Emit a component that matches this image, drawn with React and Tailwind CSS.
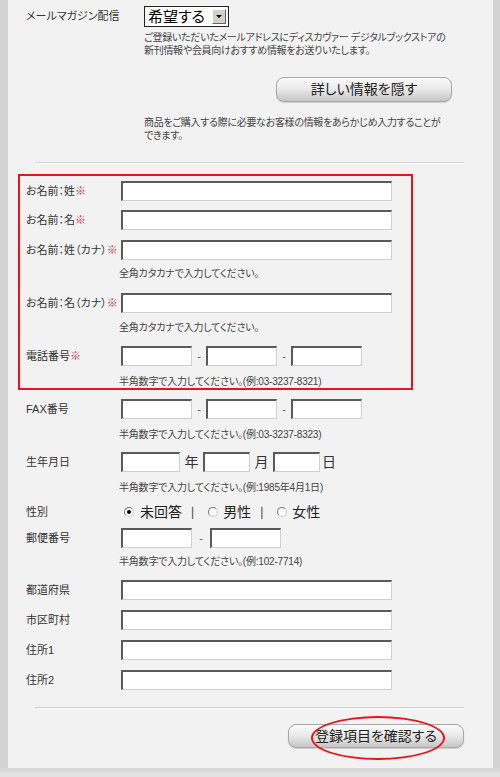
import React from "react";

const font = "font-['Liberation_Sans','Noto_Sans_CJK_JP',sans-serif] [font-feature-settings:'palt']";

function Field({ className = "" }) {
  return (
    <input
      type="text"
      className={`block h-[20px] bg-white border-t-2 border-l-2 border-r border-b border-t-[#5a5a5a] border-l-[#5a5a5a] border-r-[#d0d0d0] border-b-[#d0d0d0] outline-none ${className}`}
    />
  );
}

function Row({ label, req, className = "", children }) {
  return (
    <div className={`flex items-center h-[20px] ${className}`}>
      <div className="w-[101px] pl-[6px] text-[11px] text-[#333] whitespace-nowrap">
        {label}
        {req && <span className="text-[#c8323c]">※</span>}
      </div>
      <div className="flex items-center">{children}</div>
    </div>
  );
}

function Hint({ children, className = "" }) {
  return (
    <div className={`pl-[99px] text-[10px] leading-[13px] text-[#444] tracking-[-0.2px] ${className}`}>
      {children}
    </div>
  );
}

function Dash({ className = "" }) {
  return <span className={`text-[11px] text-[#555] text-center ${className}`}>-</span>;
}

function Radio({ checked }) {
  return (
    <span className="inline-flex items-center justify-center w-[10px] h-[10px] rounded-full bg-white border border-[#777] border-b-[#ccc] border-r-[#ccc]">
      {checked && <span className="w-[4px] h-[4px] rounded-full bg-black" />}
    </span>
  );
}

function GrayButton({ children, className = "" }) {
  return (
    <button
      className={`rounded-[8px] border border-[#a8a8a8] bg-gradient-to-b from-[#fbfbfb] via-[#e8e8e8] to-[#c6c6c6] text-[14px] text-[#222] shadow-[0_1px_1px_rgba(0,0,0,0.15)] ${className}`}
    >
      {children}
    </button>
  );
}

export default function App() {
  return (
    <div className={`w-[500px] h-[777px] bg-[#d3d3d3] overflow-hidden ${font}`}>
      <div className="ml-[8px] w-[485px] h-[768px] bg-[#f2f2f2]">
        {/* MAIL MAGAZINE */}
        <div className="pt-[6px] pl-[18px]">
          <div className="flex items-center h-[21px]">
            <div className="w-[118px] text-[11px] text-[#333]">メールマガジン配信</div>
            <div className="flex items-center w-[85px] h-[21px] bg-white border border-[#222]">
              <span className="flex-1 pl-[3px] text-[15px] leading-none text-black">希望する</span>
              <span className="flex items-center justify-center w-[14px] h-[15px] mr-[2px] bg-[#d4d0c8] border border-[#fff] border-b-[#666] border-r-[#666]">
                <span className="w-0 h-0 border-l-[3px] border-r-[3px] border-t-[3px] border-l-transparent border-r-transparent border-t-black" />
              </span>
            </div>
          </div>
          <div className="mt-[4px] pl-[118px] text-[10px] leading-[13px] text-[#444] tracking-[-0.3px]">
            <div>ご登録いただいたメールアドレスにディスカヴァー デジタルブックストアの</div>
            <div>新刊情報や会員向けおすすめ情報をお送りいたします。</div>
          </div>
        </div>

        <GrayButton className="block mt-[20px] ml-[268px] w-[176px] h-[25px]">詳しい情報を隠す</GrayButton>

        <div className="mt-[14px] pl-[136px] text-[10px] leading-[13px] text-[#444] tracking-[-0.3px]">
          <div>商品をご購入する際に必要なお客様の情報をあらかじめ入力することが</div>
          <div>できます。</div>
        </div>

        <div className="mt-[20px] ml-[27px] w-[429px] h-[2px] bg-[#d2d2d2] border-b border-white" />

        {/* FORM */}
        <div className="mt-[10px] ml-[12px] w-[391px]">
          <div className="-mx-[2px] border-2 border-[#e8141b]">
            <Row label="お名前：姓" req className="mt-[5px]">
              <Field className="w-[271px]" />
            </Row>
            <Row label="お名前：名" req className="mt-[9px]">
              <Field className="w-[271px]" />
            </Row>
            <Row label="お名前：姓（カナ）" req className="mt-[10px]">
              <Field className="w-[271px]" />
            </Row>
            <Hint className="mt-[7px]">全角カタカナで入力してください。</Hint>
            <Row label="お名前：名（カナ）" req className="mt-[13px]">
              <Field className="w-[271px]" />
            </Row>
            <Hint className="mt-[8px]">全角カタカナで入力してください。</Hint>
            <Row label="電話番号" req className="mt-[12px]">
              <Field className="w-[71px]" />
              <Dash className="w-[14px]" />
              <Field className="w-[71px]" />
              <Dash className="w-[14px]" />
              <Field className="w-[71px]" />
            </Row>
            <Hint className="mt-[9px]">半角数字で入力してください。(例:03-3237-8321)</Hint>
          </div>

          <Row label="FAX番号" className="mt-[9px]">
            <Field className="w-[71px]" />
            <Dash className="w-[14px]" />
            <Field className="w-[71px]" />
            <Dash className="w-[14px]" />
            <Field className="w-[71px]" />
          </Row>
          <Hint className="mt-[9px]">半角数字で入力してください。(例:03-3237-8323)</Hint>

          <Row label="生年月日" className="mt-[11px]">
            <Field className="w-[59px]" />
            <span className="w-[23px] text-center text-[14px] text-[#333]">年</span>
            <Field className="w-[47px]" />
            <span className="w-[23px] text-center text-[14px] text-[#333]">月</span>
            <Field className="w-[47px]" />
            <span className="w-[18px] text-center text-[14px] text-[#333]">日</span>
          </Row>
          <Hint className="mt-[9px]">半角数字で入力してください。(例:1985年4月1日)</Hint>

          <Row label="性別" className="mt-[8px]">
            <span className="ml-[3px] flex items-center gap-[6px] text-[14px] text-[#222]">
              <Radio checked />
              <span>未回答</span>
            </span>
            <span className="mx-[9px] text-[12px] text-[#444]">|</span>
            <span className="ml-[5px] flex items-center gap-[5px] text-[14px] text-[#222]">
              <Radio />
              <span>男性</span>
            </span>
            <span className="mx-[9px] text-[12px] text-[#444]">|</span>
            <span className="ml-[5px] flex items-center gap-[5px] text-[14px] text-[#222]">
              <Radio />
              <span>女性</span>
            </span>
          </Row>

          <Row label="郵便番号" className="mt-[6px]">
            <Field className="w-[71px]" />
            <Dash className="w-[18px]" />
            <Field className="w-[71px]" />
          </Row>
          <Hint className="mt-[7px]">半角数字で入力してください。(例:102-7714)</Hint>

          <Row label="都道府県" className="mt-[12px]">
            <Field className="w-[271px]" />
          </Row>
          <Row label="市区町村" className="mt-[10px]">
            <Field className="w-[271px]" />
          </Row>
          <Row label="住所1" className="mt-[10px]">
            <Field className="w-[271px]" />
          </Row>
          <Row label="住所2" className="mt-[10px]">
            <Field className="w-[271px]" />
          </Row>
        </div>

        <div className="mt-[17px] ml-[27px] w-[429px] h-[2px] bg-[#cfcfcf] border-b border-white" />

        <div className="relative mt-[15px] ml-[280px] w-[176px] h-[24px]">
          <GrayButton className="block w-full h-full">登録項目を確認する</GrayButton>
          <div className="absolute left-[23px] top-[-8px] w-[134px] h-[44px] rounded-[50%] border-2 border-[#e8141b] pointer-events-none" />
        </div>
      </div>
      <div className="h-[9px] border-t-4 border-[#d8d8d8] bg-[#e2e2e2]" />
    </div>
  );
}
